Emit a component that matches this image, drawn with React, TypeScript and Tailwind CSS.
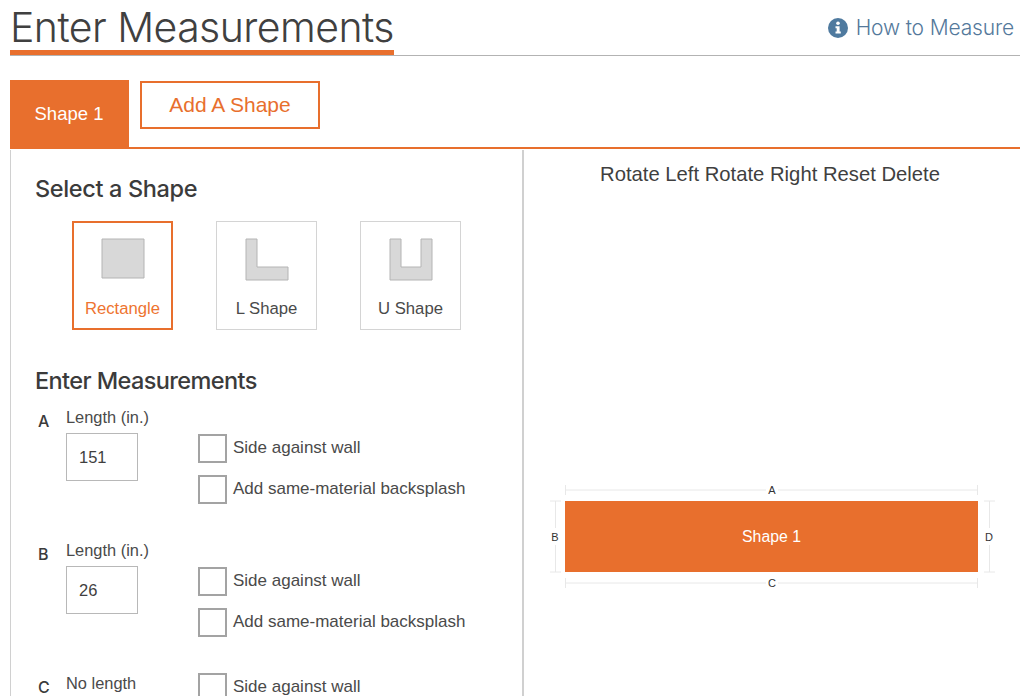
const SHAPES = [
  { label: 'Rectangle', path: 'M0 0H42V39H0Z', active: true },
  { label: 'L Shape', path: 'M0 0H11V28H42V41H0Z', active: false },
  { label: 'U Shape', path: 'M0 0H11V28H31V0H42V41H0Z', active: false },
];

const SIDES = [
  { letter: 'A', label: 'Length (in.)', value: '151' },
  { letter: 'B', label: 'Length (in.)', value: '26' },
];

function Check({ label }: { label: string }) {
  return (
    <div className="flex items-center gap-[6px] h-[29px]">
      <div className="w-[29px] h-[29px] border-2 border-[#a3a3a3] bg-white shrink-0" />
      <span className="text-[17px] leading-[20px] text-[#4a4a4a] mb-[2px]">{label}</span>
    </div>
  );
}

function Diagram() {
  const line = '#e8e8e8';
  return (
    <svg width="470" height="110" viewBox="0 0 470 110" className="block">
      <g stroke={line} strokeWidth="1" fill="none">
        <path d="M16.5 5V15M16.5 10H217M229 10H428.5M428.5 5V15" />
        <path d="M16.5 98V108M16.5 103H217M229 103H428.5M428.5 98V108" />
        <path d="M1 21H12M6.5 21V48M6.5 65V92M1 92H12" />
        <path d="M435 21H446M440.5 21V48M440.5 65V92M435 92H446" />
      </g>
      <rect x="16" y="21" width="413" height="71" fill="#e86f2d" />
      <g fontSize="11" fill="#333333" textAnchor="middle">
        <text x="223" y="14">A</text>
        <text x="223" y="107">C</text>
        <text x="6" y="60.5">B</text>
        <text x="440" y="60.5">D</text>
      </g>
      <text x="222.5" y="61.5" fontSize="15.8" fill="#ffffff" textAnchor="middle">Shape 1</text>
    </svg>
  );
}

export default function App() {
  return (
    <div
      className="w-[1024px] h-[696px] overflow-hidden bg-white pl-[10px] pr-[4px] text-[#3f3f3f]"
      style={{ fontFamily: '"Liberation Sans", Arial, sans-serif' }}
    >
      {/* Page title */}
      <div className="flex items-start justify-between h-[56px] border-b border-[#b3b3b3]">
        <div className="h-[55px] w-[384px] border-b-[5px] border-[#e86f2d]">
          <h1 className="text-[41px] leading-[55px] font-light font-['Inter'] tracking-[-0.55px] text-[#404040] whitespace-nowrap">
            Enter Measurements
          </h1>
        </div>
        <div className="flex items-center gap-[8px] mt-[16px] mr-[6px] text-[#54799b]">
          <svg width="20" height="20" viewBox="0 0 20 20">
            <circle cx="10" cy="10" r="10" fill="#4f7a9f" />
            <circle cx="10" cy="5.2" r="1.8" fill="#fff" />
            <path d="M7.5 8.2H11.6V13.6H12.8V15.6H7.5V13.6H8.7V10.2H7.5Z" fill="#fff" />
          </svg>
          <span className="text-[21px] leading-[24px] font-['Inter'] font-light tracking-[-0.15px]">How to Measure</span>
        </div>
      </div>

      {/* Tabs */}
      <div className="flex items-start gap-[11px] mt-[24px] h-[69px] border-b-2 border-[#e86f2d]">
        <div className="w-[119px] h-[67px] bg-[#e86f2d] flex items-center justify-center text-white text-[18.5px] pt-[1px] pr-[1px]">
          Shape 1
        </div>
        <div className="w-[180px] h-[48px] mt-[1px] border-2 border-[#e86f2d] flex items-center justify-center text-[#e86f2d] text-[21px]">
          Add A Shape
        </div>
      </div>

      <div className="flex h-[547px] mt-[1px]">
        {/* Left column */}
        <div className="w-[514px] shrink-0 border-l border-r-2 border-[#d0d0d0] pl-[24px]">
          <h2 className="mt-[25px] text-[23.5px] leading-[28px] font-medium font-['Inter'] text-[#3b3b3b] tracking-[-0.35px]">Select a Shape</h2>
          <div className="flex gap-[43px] mt-[18px] ml-[37px]">
            {SHAPES.map((s) => (
              <div
                key={s.label}
                className={
                  s.active
                    ? 'w-[101px] h-[109px] border-2 border-[#e86f2d] flex flex-col items-center'
                    : 'w-[101px] h-[109px] border border-[#d4d4d4] flex flex-col items-center'
                }
              >
                <svg width="44" height="43" viewBox="-1 -1 44 43" className={s.active ? 'mt-[15px]' : 'mt-[16px]'}>
                  <path d={s.path} fill="#d8d8d8" stroke="#b4b4b4" strokeWidth="1" />
                </svg>
                <span className={s.active ? 'mt-[18px] text-[16.7px] leading-[20px] text-[#ee7430]' : 'mt-[18px] text-[16.7px] leading-[20px] text-[#4a4a4a]'}>
                  {s.label}
                </span>
              </div>
            ))}
          </div>

          <h2 className="mt-[37px] text-[23.5px] leading-[28px] font-medium font-['Inter'] text-[#3b3b3b] tracking-[-0.6px]">Enter Measurements</h2>

          <div className="mt-[13px]">
            {SIDES.map((side) => (
              <div key={side.letter} className="flex h-[133px]">
                <div className="w-[28px] ml-[3px] mt-[3px] text-[16px] leading-[20px] font-medium font-['Inter'] text-[#3b3b3b]">{side.letter}</div>
                <div className="w-[132px] shrink-0">
                  <div className="-mt-[1px] text-[16.4px] leading-[20px] text-[#4a4a4a]">{side.label}</div>
                  <div className="mt-[6px] w-[72px] h-[48px] border border-[#b8b8b8] flex items-center pl-[12px] text-[16.5px] text-[#3f3f3f]">
                    {side.value}
                  </div>
                </div>
                <div className="flex flex-col gap-[12px] mt-[26px]">
                  <Check label="Side against wall" />
                  <Check label="Add same-material backsplash" />
                </div>
              </div>
            ))}
            <div className="flex">
              <div className="w-[28px] ml-[3px] mt-[3px] text-[16px] leading-[20px] font-medium font-['Inter'] text-[#3b3b3b]">C</div>
              <div className="-mt-[1px] w-[132px] shrink-0 text-[16.4px] leading-[20px] text-[#4a4a4a]">No length</div>
              <div className="-mt-[1px]">
                <Check label="Side against wall" />
              </div>
            </div>
          </div>
        </div>

        {/* Right column */}
        <div className="flex-1 flex flex-col items-center">
          <div className="mt-[12px] text-[20.25px] leading-[24px] text-[#3f3f3f] ml-[-4px] whitespace-nowrap">Rotate Left Rotate Right Reset Delete</div>
          <div className="mt-[294px] ml-[25px] self-start">
            <Diagram />
          </div>
        </div>
      </div>
    </div>
  );
}
